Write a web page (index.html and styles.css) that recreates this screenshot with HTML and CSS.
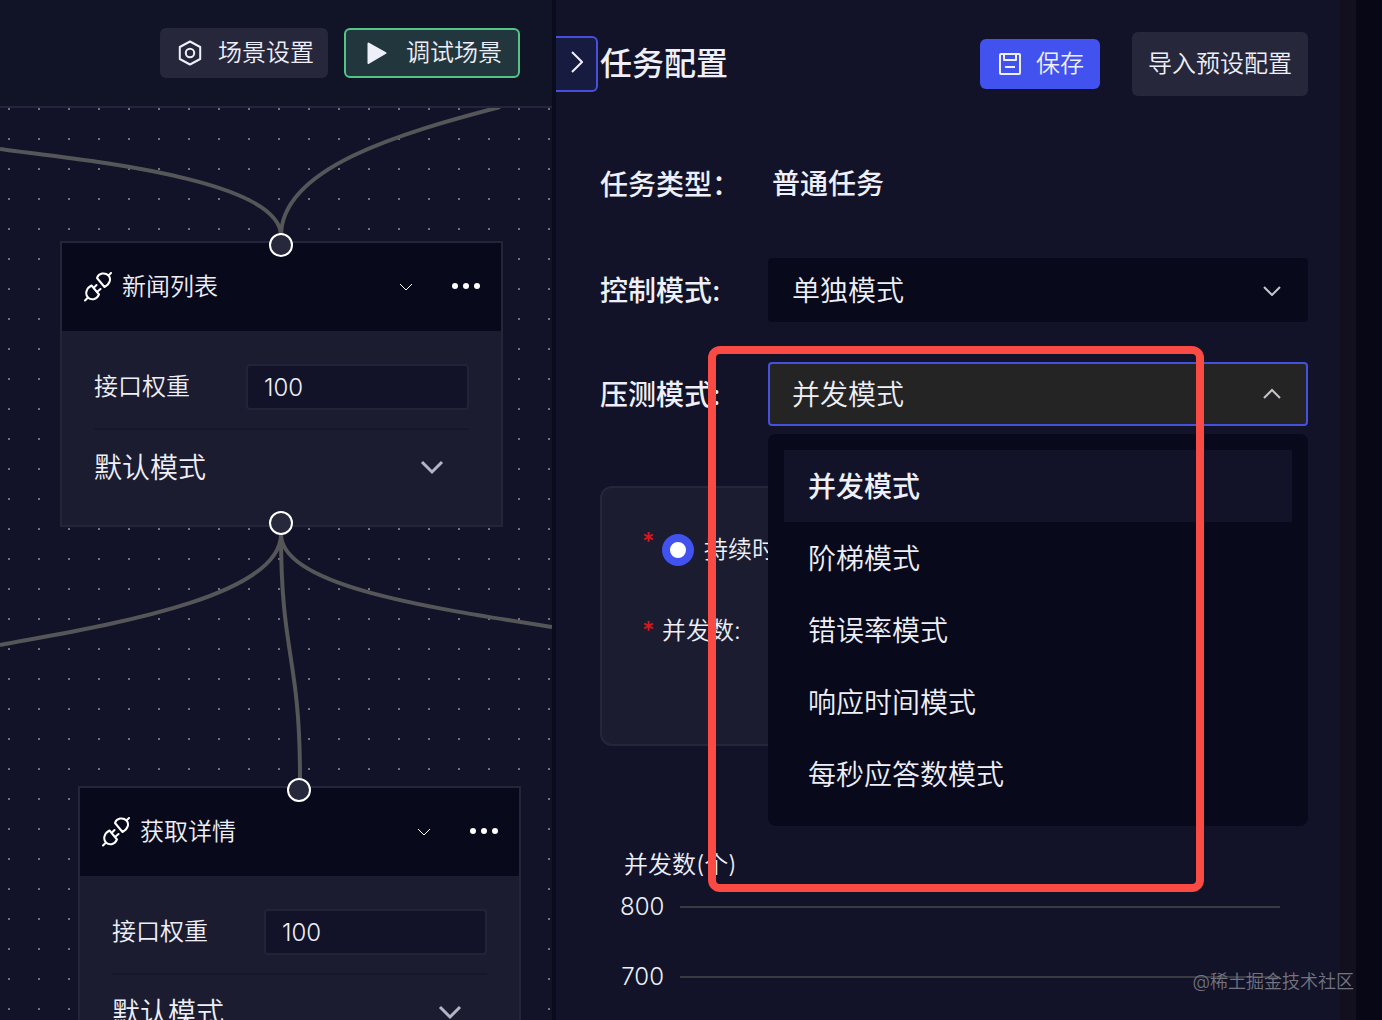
FILE: index.html
```html
<!DOCTYPE html>
<html lang="zh-CN">

<head>
    <meta charset="UTF-8">
    <meta name="viewport" content="width=device-width, initial-scale=1.0">
    <title>任务配置</title>
    <link rel="stylesheet" href="styles.css">
</head>

<body>
    <div class="app">
        <main class="workspace">
            <header class="toolbar">
                <button class="btn btn-grey" type="button">
                    <svg class="icon" viewBox="0 0 28 28" fill="none" stroke="currentColor" stroke-width="2" stroke-linejoin="round">
                        <path d="M14 2.500L24.200 8v12L14 25.500L3.800 20V8z" />
                        <circle cx="14" cy="14" r="4.200" />
                    </svg>
                    场景设置
                </button>
                <button class="btn btn-run" type="button">
                    <svg class="icon" viewBox="0 0 28 28" fill="currentColor" stroke="currentColor" stroke-width="2" stroke-linejoin="round">
                        <path d="M4.500 4.500L21.500 14L4.500 24z" />
                    </svg>
                    调试场景
                </button>
            </header>
            <div class="canvas">
                <svg class="edges" width="552" height="912" fill="none">
                    <path d="M281 128C281 68 60 50 0 41" />
                    <path d="M281 128C281 60 400 25 500 -1" />
                    <path d="M281 426C281 492 90 520 0 537" />
                    <path d="M281 426C281 548 300 548 300 670" />
                    <path d="M281 426C281 478 430 500 552 519" />
                </svg>

                <section class="node node-list">
                    <span class="port port-top"></span>
                    <div class="node-head">
                        <svg class="plug" viewBox="0 0 28 30" fill="none" stroke="currentColor" stroke-width="2" stroke-linecap="round" stroke-linejoin="round">
                            <path d="M13 6L20.500 15C26 12 27.500 7 24.500 3.500C21 0 14.500 1 13 6zM24.500 3.500L27 1" />
                            <path d="M7.500 13.500L15 22.500C12.500 28 7 28.500 4 25.500C0.500 22 2.500 16 7.500 13.500zM4 25.500L1 28.500M9.500 16L12.500 13M13 20L16.500 17" />
                        </svg>
                        <h3 class="node-title">新闻列表</h3>
                        <button class="icon-btn" type="button" aria-label="展开">
                            <svg width="14" height="8" viewBox="0 0 14 8" fill="none" stroke="currentColor"><path d="M1 1L7 7L13 1" /></svg>
                        </button>
                        <button class="icon-btn" type="button" aria-label="更多">
                            <svg width="30" height="8" viewBox="0 0 30 8" fill="currentColor"><circle cx="4" cy="3" r="3" /><circle cx="15" cy="3" r="3" /><circle cx="26" cy="3" r="3" /></svg>
                        </button>
                    </div>
                    <div class="node-body">
                        <div class="weight">
                            <label for="weight1">接口权重</label>
                            <input class="weight-input" id="weight1" type="text" value="100">
                        </div>
                        <button class="mode" type="button">
                            默认模式
                            <svg width="24" height="16" viewBox="0 0 24 16" fill="none" stroke="currentColor" stroke-width="3"><path d="M2 2L12 12L22 2" /></svg>
                        </button>
                    </div>
                    <span class="port port-bottom"></span>
                </section>

                <section class="node node-detail">
                    <span class="port port-top"></span>
                    <div class="node-head">
                        <svg class="plug" viewBox="0 0 28 30" fill="none" stroke="currentColor" stroke-width="2" stroke-linecap="round" stroke-linejoin="round">
                            <path d="M13 6L20.500 15C26 12 27.500 7 24.500 3.500C21 0 14.500 1 13 6zM24.500 3.500L27 1" />
                            <path d="M7.500 13.500L15 22.500C12.500 28 7 28.500 4 25.500C0.500 22 2.500 16 7.500 13.500zM4 25.500L1 28.500M9.500 16L12.500 13M13 20L16.500 17" />
                        </svg>
                        <h3 class="node-title">获取详情</h3>
                        <button class="icon-btn" type="button" aria-label="展开">
                            <svg width="14" height="8" viewBox="0 0 14 8" fill="none" stroke="currentColor"><path d="M1 1L7 7L13 1" /></svg>
                        </button>
                        <button class="icon-btn" type="button" aria-label="更多">
                            <svg width="30" height="8" viewBox="0 0 30 8" fill="currentColor"><circle cx="4" cy="3" r="3" /><circle cx="15" cy="3" r="3" /><circle cx="26" cy="3" r="3" /></svg>
                        </button>
                    </div>
                    <div class="node-body">
                        <div class="weight">
                            <label for="weight2">接口权重</label>
                            <input class="weight-input" id="weight2" type="text" value="100">
                        </div>
                        <button class="mode" type="button">
                            默认模式
                            <svg width="24" height="16" viewBox="0 0 24 16" fill="none" stroke="currentColor" stroke-width="3"><path d="M2 2L12 12L22 2" /></svg>
                        </button>
                    </div>
                </section>
            </div>
        </main>

        <aside class="drawer">
            <div class="config">
                <header class="config-head">
                    <button class="collapse" type="button" aria-label="收起">
                        <svg width="14" height="24" viewBox="0 0 14 24" fill="none" stroke="currentColor" stroke-width="2"><path d="M3 2L13 12L3 22" /></svg>
                    </button>
                    <h1 class="config-title">任务配置</h1>
                    <button class="btn btn-save" type="button">
                        <svg class="icon" viewBox="0 0 28 28" fill="none" stroke="currentColor" stroke-width="2" stroke-linejoin="round">
                            <rect x="4" y="4" width="20" height="20" rx="1" />
                            <path d="M8 4v6h12V4M9 17h10" />
                        </svg>
                        保存
                    </button>
                    <button class="btn btn-import" type="button">导入预设配置</button>
                </header>

                <form class="form">
                    <div class="row row-type">
                        <span class="row-label">任务类型：</span>
                        <span class="row-value">普通任务</span>
                    </div>
                    <div class="row">
                        <label class="row-label" for="control">控制模式:</label>
                        <div class="field">
                            <select class="select" id="control">
                                <option>单独模式</option>
                            </select>
                            <svg class="arrow" viewBox="0 0 18 12" fill="none" stroke="currentColor" stroke-width="2"><path d="M1 3L9 11L17 3" /></svg>
                        </div>
                    </div>
                    <div class="row">
                        <label class="row-label" for="pressure">压测模式:</label>
                        <div class="field">
                            <select class="select select-open" id="pressure">
                                <option>并发模式</option>
                                <option>阶梯模式</option>
                                <option>错误率模式</option>
                                <option>响应时间模式</option>
                                <option>每秒应答数模式</option>
                            </select>
                            <svg class="arrow" viewBox="0 0 18 12" fill="none" stroke="currentColor" stroke-width="2"><path d="M1 10L9 2L17 10" /></svg>
                            <ul class="menu" role="listbox" aria-label="压测模式">
                                <li class="menu-item active" role="option" aria-selected="true">并发模式</li>
                                <li class="menu-item" role="option">阶梯模式</li>
                                <li class="menu-item" role="option">错误率模式</li>
                                <li class="menu-item" role="option">响应时间模式</li>
                                <li class="menu-item" role="option">每秒应答数模式</li>
                            </ul>
                        </div>
                    </div>
                    <div class="card">
                        <div class="card-row">
                            <span class="star star-top">*</span>
                            <input class="radio" id="duration" type="radio" name="limit" checked>
                            <label for="duration">持续时长:</label>
                        </div>
                        <div class="card-row">
                            <span class="star">*</span>
                            <span>并发数:</span>
                        </div>
                    </div>
                </form>

                <section class="chart">
                    <h2 class="chart-title">并发数(个)</h2>
                    <div class="tick"><span class="tick-label">800</span></div>
                    <div class="tick"><span class="tick-label">700</span></div>
                </section>
            </div>
            <div class="scrollbar"></div>
            <div class="edge"></div>
            <div class="mark"></div>
            <span class="watermark">@稀土掘金技术社区</span>
        </aside>
    </div>
</body>

</html>
```

FILE: styles.css
```css
* {
    box-sizing: border-box;
}

body {
    margin: 0;
    background: #121328;
    color: #eeeff8;
    font-family: Inter, "Noto Sans CJK SC", sans-serif;
    font-size: 24px;
    font-weight: 350;
    line-height: 32px;
}

h1, h2, h3 {
    margin: 0;
    font-weight: inherit;
}

button, input, select {
    font: inherit;
    color: inherit;
}

button {
    margin: 0;
    padding: 0;
    border: 0;
    background: none;
    cursor: pointer;
}

svg {
    display: block;
    flex: none;
}

.app {
    display: grid;
    grid-template-columns: minmax(0, 1fr) 830px;
    grid-template-rows: 100%;
    height: 100vh;
    overflow: hidden;
}

/* 画布 */
.workspace {
    display: flex;
    flex-direction: column;
    min-width: 0;
}

.toolbar {
    display: flex;
    justify-content: flex-end;
    gap: 16px;
    padding: 28px 32px;
    background: #111327;
    border-bottom: 2px solid #24253a;
}

.btn {
    display: flex;
    align-items: center;
    gap: 14px;
    height: 50px;
    padding: 0 14px 0 16px;
    border-radius: 6px;
    white-space: nowrap;
}

.icon {
    width: 28px;
    height: 28px;
}

.btn-grey {
    background: #26273b;
}

.btn-run {
    padding: 0 16px 0 18px;
    border: 2px solid #55c585;
    background: #22373d;
}

.canvas {
    position: relative;
    flex: 1;
    overflow: hidden;
    background: #121228 radial-gradient(circle at 9px 1px, #70717d 1px, transparent 1px) 0 0 / 30px 30px;
}

.edges {
    position: absolute;
    top: 0;
    left: 0;
    stroke: #555657;
    stroke-width: 4px;
}

.node {
    position: absolute;
    width: 443px;
    border: 2px solid #242539;
    background: #1b1c30;
}

.node-list {
    left: 60px;
    top: 133px;
}

.node-detail {
    left: 78px;
    top: 678px;
}

.port {
    position: absolute;
    left: 50%;
    width: 24px;
    height: 24px;
    margin-left: -13px;
    border: 2px solid #ffffff;
    border-radius: 50%;
    background: #27283b;
}

.port-top {
    top: -10px;
}

.port-bottom {
    bottom: -10px;
}

.node-head {
    display: flex;
    align-items: center;
    height: 88px;
    padding: 0 20px 0 22px;
    background: #080a1c;
}

.plug {
    width: 28px;
    height: 30px;
    margin-right: 10px;
    color: #ffffff;
}

.node-title {
    flex: 1;
    font-size: 24px;
}

.icon-btn {
    margin-left: 38px;
    color: #ffffff;
}

.node-body {
    padding: 33px 32px 20px;
}

.weight {
    display: flex;
    align-items: center;
    justify-content: space-between;
    padding-bottom: 18px;
    border-bottom: 2px solid #16172a;
}

.weight-input {
    width: 223px;
    height: 46px;
    padding: 0 16px;
    border: 2px solid #222338;
    border-radius: 4px;
    background: #121328;
}

.mode {
    display: flex;
    align-items: center;
    justify-content: space-between;
    width: 100%;
    height: 75px;
    padding-right: 25px;
    font-size: 28px;
}

.mode svg {
    color: #b4b5c4;
}

/* 任务配置 */
.drawer {
    position: relative;
    display: flex;
    border-left: 4px solid #0a0b1d;
}

.config {
    flex: 1;
    min-width: 0;
    padding: 32px 32px 0 0;
}

.config-head {
    display: flex;
    align-items: center;
}

.collapse {
    display: flex;
    align-items: center;
    justify-content: center;
    width: 42px;
    height: 56px;
    padding-bottom: 4px;
    border: 2px solid #4551dc;
    border-left: 0;
    border-radius: 0 6px 6px 0;
    background: #181b40;
}

.config-title {
    flex: 1;
    margin-left: 2px;
    font-size: 32px;
    font-weight: 500;
}

.btn-save {
    gap: 12px;
    padding: 0 16px;
    background: #4252ee;
}

.btn-import {
    height: 64px;
    margin-left: 32px;
    padding: 0 16px;
    background: #26273b;
}

.form {
    display: flex;
    flex-direction: column;
    gap: 40px;
    margin: 58px 0 0 44px;
}

.row {
    display: flex;
    align-items: center;
    height: 64px;
    font-size: 28px;
}

.row-type {
    padding-bottom: 4px;
}

.row-label {
    width: 168px;
    padding-top: 2px;
    font-weight: 500;
}

.row-value {
    padding-left: 4px;
    font-weight: 500;
}

.field {
    position: relative;
    flex: 1;
}

.select {
    display: block;
    width: 100%;
    height: 64px;
    padding: 2px 22px 0;
    appearance: none;
    border: 2px solid #080a1c;
    border-radius: 4px;
    background: #080a1c;
}

.select-open {
    border-color: #4551dc;
    background: #242424;
}

.arrow {
    position: absolute;
    top: 26px;
    right: 27px;
    width: 18px;
    height: 12px;
    color: #c4c5cc;
    pointer-events: none;
}

.menu {
    position: absolute;
    z-index: 1;
    top: 72px;
    left: 0;
    right: 0;
    margin: 0;
    padding: 16px;
    border-radius: 8px;
    background: #080a1c;
    list-style: none;
}

.menu-item {
    padding: 2px 24px 0;
    line-height: 70px;
}

.menu-item.active {
    background: #121328;
    font-weight: 500;
}

.card {
    display: flex;
    flex-direction: column;
    gap: 49px;
    margin-top: 20px;
    padding: 46px 40px 97px;
    border: 2px solid #25263a;
    border-radius: 12px;
    background: #1b1c2f;
}

.card-row {
    display: flex;
    align-items: center;
    height: 32px;
}

.star {
    width: 20px;
    color: #d9181d;
    font-weight: 500;
}

.star-top {
    align-self: flex-start;
    line-height: 16px;
}

.radio {
    width: 32px;
    height: 32px;
    margin: 0 10px 0 0;
    appearance: none;
    border: 8px solid #4252ee;
    border-radius: 50%;
    background: #ffffff;
}

.chart {
    margin: 103px 28px 0 64px;
}

.chart-title {
    margin-bottom: 14px;
    padding-left: 4px;
    font-size: 24px;
}

.tick {
    display: flex;
    align-items: center;
    gap: 16px;
    margin-bottom: 46px;
    line-height: 24px;
}

.tick::after {
    content: '';
    flex: 1;
    height: 2px;
    background: #3a3b42;
}

.tick-label {
    width: 44px;
    text-align: right;
}

.scrollbar {
    width: 16px;
    background: #12101f;
}

.edge {
    width: 26px;
    background: #070716;
}

.mark {
    position: absolute;
    z-index: 2;
    top: 346px;
    left: 152px;
    width: 496px;
    height: 546px;
    border: 8px solid #fa4a44;
    border-radius: 12px;
}

.watermark {
    position: absolute;
    right: 28px;
    bottom: 22px;
    color: #74747f;
    font-size: 18px;
}
```
